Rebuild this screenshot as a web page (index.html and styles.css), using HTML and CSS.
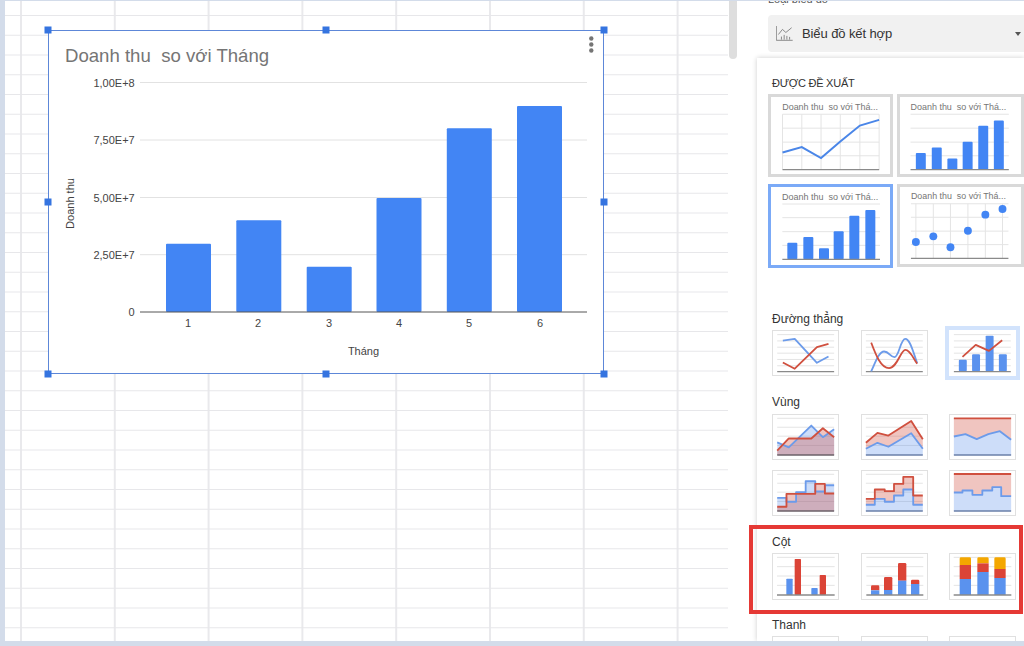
FILE: index.html
```html
<!DOCTYPE html>
<html lang="en">
<head>
    <meta charset="UTF-8">
    <title>Biểu đồ kết hợp</title>
    <link rel="stylesheet" href="styles.css">
</head>
<body>

<div class="page">
    <div class="sheet">
        <div class="chart">
            <svg class="chart-svg" viewBox="48 30 556 344">
                <text class="chart-title" x="65" y="62">Doanh thu&#160; so với Tháng</text>
                <circle class="chart-dot" cx="591.3" cy="38.5" r="2.2"/>
                <circle class="chart-dot" cx="591.3" cy="44.5" r="2.2"/>
                <circle class="chart-dot" cx="591.3" cy="50.5" r="2.2"/>

                <path class="chart-grid" d="M140 82.5H587M140 140H587M140 197.5H587M140 254.7H587"/>
                <rect class="chart-bar" x="166" y="243.7" width="45" height="68.3" rx="1"/>
                <rect class="chart-bar" x="236.3" y="220.3" width="45" height="91.7" rx="1"/>
                <rect class="chart-bar" x="306.7" y="266.7" width="45" height="45.3" rx="1"/>
                <rect class="chart-bar" x="376.5" y="198" width="45" height="114" rx="1"/>
                <rect class="chart-bar" x="446.8" y="128.3" width="45" height="183.7" rx="1"/>
                <rect class="chart-bar" x="517" y="106" width="45" height="206" rx="1"/>
                <path class="chart-base" d="M140 312H587"/>

                <text class="chart-label end" x="134.7" y="86.5">1,00E+8</text>
                <text class="chart-label end" x="134.7" y="144">7,50E+7</text>
                <text class="chart-label end" x="134.7" y="201.5">5,00E+7</text>
                <text class="chart-label end" x="134.7" y="258.7">2,50E+7</text>
                <text class="chart-label end" x="134.7" y="316">0</text>

                <text class="chart-label mid" x="188" y="327">1</text>
                <text class="chart-label mid" x="258" y="327">2</text>
                <text class="chart-label mid" x="329" y="327">3</text>
                <text class="chart-label mid" x="399" y="327">4</text>
                <text class="chart-label mid" x="469" y="327">5</text>
                <text class="chart-label mid" x="540" y="327">6</text>

                <text class="chart-label mid" x="363.5" y="355">Tháng</text>
                <text class="chart-label mid" transform="translate(74 203.5) rotate(-90)">Doanh thu</text>
            </svg>
            <span class="handle tl"></span>
            <span class="handle tc"></span>
            <span class="handle tr"></span>
            <span class="handle ml"></span>
            <span class="handle mr"></span>
            <span class="handle bl"></span>
            <span class="handle bc"></span>
            <span class="handle br"></span>
        </div>
    </div>

    <div class="sidebar">
        <div class="scrollbar"></div>
        <div class="panel">
            <div class="field-label">Loại biểu đồ</div>
            <div class="dropdown">
                <svg class="dropdown-icon" viewBox="156 78 50 44">
                    <path class="icon-line" d="M157 78V120H205M163 103L175 88L185 97L202 83"/>
                    <path class="icon-line" d="M172 118V109M180 118V104M188 118V107M196 118V110"/>
                </svg>
                <span class="dropdown-text">Biểu đồ kết hợp</span>
                <span class="caret"></span>
            </div>

            <div class="popup">
                <div class="section-title caps">ĐƯỢC ĐỀ XUẤT</div>
                <div class="suggest-grid">
                    <svg class="suggest" viewBox="25 12 373 250">
                        <text class="thumb-title" x="66" y="61">Doanh thu&#160; so với Thá...</text>
                        <path class="thumb-grid" d="M67 73H358M67 115H358M67 157H358M67 198H358M67 73V240M125 73V240M183 73V240M241 73V240M300 73V240M358 73V240"/>
                        <path class="thumb-base" d="M67 240H358"/>
                        <path class="line-strong" d="M67 188L125 172L183 205L241 155L300 107L358 90"/>
                    </svg>
                    <svg class="suggest wide" viewBox="412 12 381 250">
                        <text class="thumb-title" x="452" y="61">Doanh thu&#160; so với Thá...</text>
                        <path class="thumb-grid" d="M452 73H748M452 115H748M452 157H748M452 198H748"/>
                        <rect class="bar-strong" x="468" y="190" width="30" height="50" rx="3"/>
                        <rect class="bar-strong" x="516" y="173" width="30" height="67" rx="3"/>
                        <rect class="bar-strong" x="563" y="206" width="30" height="34" rx="3"/>
                        <rect class="bar-strong" x="609" y="156" width="30" height="84" rx="3"/>
                        <rect class="bar-strong" x="656" y="108" width="30" height="132" rx="3"/>
                        <rect class="bar-strong" x="703" y="92" width="30" height="148" rx="3"/>
                        <path class="thumb-base" d="M452 240H748"/>
                    </svg>
                    <svg class="suggest selected" viewBox="25 283 373 252">
                        <text class="thumb-title" x="66" y="330">Doanh thu&#160; so với Thá...</text>
                        <path class="thumb-grid" d="M67 343H360M67 384H360M67 426H360M67 467H360"/>
                        <rect class="bar-strong" x="82" y="459" width="30" height="50" rx="3"/>
                        <rect class="bar-strong" x="130" y="442" width="30" height="67" rx="3"/>
                        <rect class="bar-strong" x="177" y="476" width="30" height="33" rx="3"/>
                        <rect class="bar-strong" x="221" y="425" width="30" height="84" rx="3"/>
                        <rect class="bar-strong" x="268" y="378" width="30" height="131" rx="3"/>
                        <rect class="bar-strong" x="316" y="361" width="30" height="148" rx="3"/>
                        <path class="thumb-base" d="M67 509H360"/>
                    </svg>
                    <svg class="suggest wide" viewBox="412 283 381 252">
                        <text class="thumb-title" x="452" y="330">Doanh thu&#160; so với Thá...</text>
                        <path class="thumb-grid" d="M452 343H748M452 384H748M452 426H748M452 467H748M467 343V509M520 343V509M572 343V509M625 343V509M678 343V509M730 343V509"/>
                        <path class="thumb-base" d="M452 509H748"/>
                        <circle class="bar-strong" cx="467" cy="459" r="12"/>
                        <circle class="bar-strong" cx="520" cy="442" r="12"/>
                        <circle class="bar-strong" cx="572" cy="475" r="12"/>
                        <circle class="bar-strong" cx="625" cy="425" r="12"/>
                        <circle class="bar-strong" cx="678" cy="376" r="12"/>
                        <circle class="bar-strong" cx="730" cy="359" r="12"/>
                    </svg>
                </div>

                <div class="section-title line-head">Đường thẳng</div>
                <div class="thumb-grid-row">
                    <svg class="thumb" viewBox="35 75 201 139">
                        <path class="thumb-grid" d="M50 89H222M50 108H222M50 127H222M50 145H222M50 164H222M50 183H222"/>
                        <path class="thumb-base" d="M50 201H222"/>
                        <path class="line-blue" d="M67 107L103 102L170 174L205 155"/>
                        <path class="line-red" d="M67 173L103 192L170 127L205 117"/>
                    </svg>
                    <svg class="thumb" viewBox="301 75 201 139">
                        <path class="thumb-grid" d="M315 89H487M315 108H487M315 127H487M315 145H487M315 164H487M315 183H487"/>
                        <path class="thumb-base" d="M315 201H487"/>
                        <path class="line-blue" d="M331 200C345 170 355 140 370 140C385 140 390 158 402 157C415 155 420 102 434 102C450 102 460 150 470 175"/>
                        <path class="line-red" d="M331 113C345 150 360 190 385 190C410 190 420 135 434 135C450 135 460 165 470 177"/>
                    </svg>
                    <svg class="thumb selected" viewBox="566 75 201 139">
                        <path class="thumb-grid" d="M580 89H752M580 108H752M580 127H752M580 145H752M580 164H752M580 183H752"/>
                        <rect class="bar-blue" x="595" y="165" width="24" height="35" rx="3"/>
                        <rect class="bar-blue" x="635" y="148" width="24" height="52" rx="3"/>
                        <rect class="bar-blue" x="676" y="92" width="24" height="108" rx="3"/>
                        <rect class="bar-blue" x="716" y="148" width="24" height="52" rx="3"/>
                        <path class="thumb-base" d="M580 201H752"/>
                        <path class="line-red" d="M606 156L646 120L686 138L726 106"/>
                    </svg>
                </div>

                <div class="section-title area-head">Vùng</div>
                <div class="thumb-grid-row area-rows">
                    <svg class="thumb" viewBox="35 57 201 139">
                        <path class="thumb-grid" d="M50 70H222M50 97H222M50 124H222M50 152H222"/>
                        <path class="fill-blue" d="M50 143L85 158L153 92L188 127L222 103V181H50Z"/>
                        <path class="fill-red" d="M50 168L85 131L153 131L188 100L222 127V181H50Z"/>
                        <path class="line-blue" d="M50 143L85 158L153 92L188 127L222 103"/>
                        <path class="line-red" d="M50 168L85 131L153 131L188 100L222 127"/>
                        <path class="thumb-base dark" d="M50 181H222"/>
                    </svg>
                    <svg class="thumb" viewBox="301 57 201 139">
                        <path class="thumb-grid" d="M315 70H487M315 97H487M315 124H487M315 152H487"/>
                        <path class="fill-red" d="M315 144L350 114L383 122L452 78L487 133L487 162L452 115L383 156L350 144L315 162Z"/>
                        <path class="fill-blue" d="M315 162L350 144L383 156L452 115L487 162V181H315Z"/>
                        <path class="line-blue" d="M315 162L350 144L383 156L452 115L487 162"/>
                        <path class="line-red" d="M315 144L350 114L383 122L452 78L487 133"/>
                        <path class="thumb-base blue" d="M315 181H487"/>
                    </svg>
                    <svg class="thumb" viewBox="565 57 201 139">
                        <path class="fill-red" d="M579 70H752V135L718 109L683 118L648 133L614 118L579 125Z"/>
                        <path class="fill-blue" d="M579 125L614 118L648 133L683 118L718 109L752 135V181H579Z"/>
                        <path class="line-blue" d="M579 125L614 118L648 133L683 118L718 109L752 135"/>
                        <path class="line-red" d="M579 70H752"/>
                        <path class="thumb-base blue" d="M579 181H752"/>
                    </svg>
                    <svg class="thumb" viewBox="35 226 201 139">
                        <path class="thumb-grid" d="M50 239H222M50 266H222M50 293H222M50 321H222"/>
                        <path class="fill-blue" d="M50 310H78V322H107V293H136V260H165V291H194V272H222V350H50Z"/>
                        <path class="fill-red" d="M50 337H78V298H165V268H194V297H222V350H50Z"/>
                        <path class="line-blue" d="M50 310H78V322H107V293H136V260H165V291H194V272H222"/>
                        <path class="line-red" d="M50 337H78V298H165V268H194V297H222"/>
                        <path class="thumb-base dark" d="M50 350H222"/>
                    </svg>
                    <svg class="thumb" viewBox="301 226 201 139">
                        <path class="thumb-grid" d="M315 239H487M315 266H487M315 293H487M315 321H487"/>
                        <path class="fill-red" d="M315 313H342V285H372V290H400V268H428V247H458V303H487V331H458V285H428V303H400V322H372V313H342V331H315Z"/>
                        <path class="fill-blue" d="M315 331H342V313H372V322H400V303H428V285H458V331H487V350H315Z"/>
                        <path class="line-blue" d="M315 331H342V313H372V322H400V303H428V285H458V331H487"/>
                        <path class="line-red" d="M315 313H342V285H372V290H400V268H428V247H458V303H487"/>
                        <path class="thumb-base blue" d="M315 350H487"/>
                    </svg>
                    <svg class="thumb" viewBox="565 226 201 139">
                        <path class="fill-red" d="M579 238H752V305H722V278H695V288H665V301H635V288H605V294H579Z"/>
                        <path class="fill-blue" d="M579 294H605V288H635V301H665V288H695V278H722V305H752V350H579Z"/>
                        <path class="line-blue" d="M579 294H605V288H635V301H665V288H695V278H722V305H752"/>
                        <path class="line-red" d="M579 238H752"/>
                        <path class="thumb-base blue" d="M579 350H752"/>
                    </svg>
                </div>

                <div class="section-title area-head">Cột</div>
                <div class="thumb-grid-row">
                    <svg class="thumb tall" viewBox="82 100 201 141">
                        <path class="thumb-grid" d="M97 113H270M97 141H270M97 169H270M97 197H270"/>
                        <rect class="bar-blue" x="125" y="177" width="19" height="49" rx="2"/>
                        <rect class="bar-red" x="150" y="118" width="19" height="108" rx="2"/>
                        <rect class="bar-blue" x="200" y="205" width="19" height="21" rx="2"/>
                        <rect class="bar-red" x="225" y="166" width="19" height="60" rx="2"/>
                        <path class="thumb-base" d="M97 226H270"/>
                    </svg>
                    <svg class="thumb tall" viewBox="348 100 201 141">
                        <path class="thumb-grid" d="M364 113H535M364 141H535M364 169H535M364 197H535"/>
                        <path class="bar-red" d="M378 212V201Q378 197 382 197H399Q403 197 403 201V212Z"/>
                        <rect class="bar-blue" x="378" y="212" width="25" height="14"/>
                        <path class="bar-red" d="M417 211V176Q417 172 421 172H438Q442 172 442 176V211Z"/>
                        <rect class="bar-blue" x="417" y="211" width="25" height="15"/>
                        <path class="bar-red" d="M459 183V134Q459 130 463 130H480Q484 130 484 134V183Z"/>
                        <rect class="bar-blue" x="459" y="183" width="25" height="43"/>
                        <path class="bar-red" d="M498 193V184Q498 180 502 180H519Q523 180 523 184V193Z"/>
                        <rect class="bar-blue" x="498" y="193" width="25" height="33"/>
                        <path class="thumb-base" d="M364 226H535"/>
                    </svg>
                    <svg class="thumb tall" viewBox="613 100 201 141">
                        <path class="thumb-grid" d="M627 113H800M627 141H800M627 169H800M627 197H800"/>
                        <path class="bar-yellow" d="M645 136V117Q645 113 649 113H675Q679 113 679 117V136Z"/>
                        <rect class="bar-red" x="645" y="136" width="34" height="42"/>
                        <rect class="bar-blue" x="645" y="178" width="34" height="48"/>
                        <path class="bar-yellow" d="M698 131V117Q698 113 702 113H728Q732 113 732 117V131Z"/>
                        <rect class="bar-red" x="698" y="131" width="34" height="26"/>
                        <rect class="bar-blue" x="698" y="157" width="34" height="69"/>
                        <path class="bar-yellow" d="M749 148V117Q749 113 753 113H779Q783 113 783 117V148Z"/>
                        <rect class="bar-red" x="749" y="148" width="34" height="27"/>
                        <rect class="bar-blue" x="749" y="175" width="34" height="51"/>
                        <path class="thumb-base" d="M627 226H800"/>
                    </svg>
                </div>

                <div class="section-title bar-head">Thanh</div>
                <div class="thumb-grid-row">
                    <div class="thumb empty"></div>
                    <div class="thumb empty"></div>
                    <div class="thumb empty"></div>
                </div>
            </div>
        </div>
    </div>
</div>

<div class="highlight"></div>

</body>
</html>
```

FILE: styles.css
```css
* {
    box-sizing: border-box;
}

body {
    font-family: "Liberation Sans", Arial, sans-serif;
    margin: 0;
    width: 1024px;
    height: 646px;
    overflow: hidden;
    background-color: #d3dcea;
    position: relative;
}

.page {
    display: flex;
    height: 640px;
    margin-top: 1px;
    margin-left: 5px;
}

/* spreadsheet */
.sheet {
    width: 723px;
    flex-shrink: 0;
    padding: 29px 0 0 43px;
    background-color: #fff;
    background-image:
        linear-gradient(to bottom, #e7e7ea 1px, transparent 1px),
        linear-gradient(to right, #e9e9ec 1.5px, transparent 1.5px);
    background-size: 100% 19.75px, 93.8px 100%;
    background-position: 0 14px, 15px 0;
}

.chart {
    position: relative;
    width: 556px;
    height: 344px;
    background-color: #fff;
    outline: 1.5px solid #5d87d8;
    outline-offset: -1.5px;
}

.chart-svg {
    display: block;
    width: 556px;
    height: 344px;
}

.chart-title {
    font-size: 18.6px;
    fill: #757575;
}

.chart-dot {
    fill: #757575;
}

.chart-grid {
    stroke: #e2e2e2;
    stroke-width: 1;
    fill: none;
}

.chart-base {
    stroke: #555;
    stroke-width: 1;
    fill: none;
}

.chart-bar {
    fill: #4285f4;
}

.chart-label {
    font-size: 11px;
    fill: #444;
}

.end {
    text-anchor: end;
}

.mid {
    text-anchor: middle;
}

.handle {
    position: absolute;
    width: 7px;
    height: 7px;
    background-color: #3574e0;
    transform: translate(-50%, -50%);
}

.tl { left: 0; top: 0; }
.tc { left: 50%; top: 0; }
.tr { left: 100%; top: 0; }
.ml { left: 0; top: 50%; }
.mr { left: 100%; top: 50%; }
.bl { left: 0; top: 100%; }
.bc { left: 50%; top: 100%; }
.br { left: 100%; top: 100%; }

/* right side panel */
.sidebar {
    flex: 1;
    display: flex;
    background-color: #fff;
    overflow: hidden;
}

.scrollbar {
    width: 8px;
    height: 58px;
    margin-left: 1px;
    margin-right: 1px;
    background-color: #dedede;
    border-radius: 0 0 4px 4px;
    flex-shrink: 0;
}

.panel {
    flex: 1;
    min-width: 0;
}

.field-label {
    margin-left: 30px;
    margin-top: -9px;
    height: 14px;
    line-height: 14px;
    font-size: 11px;
    color: #555;
}

.dropdown {
    display: flex;
    align-items: center;
    height: 37px;
    margin-top: 9px;
    margin-left: 30px;
    padding: 0 3px 0 8px;
    background-color: #f1f1f1;
    border-radius: 4px 0 0 4px;
}

.dropdown-icon {
    width: 17px;
    height: 15px;
}

.icon-line {
    fill: none;
    stroke: #777;
    stroke-width: 2.5;
}

.dropdown-text {
    margin-left: 9px;
    font-size: 13px;
    letter-spacing: -0.1px;
    color: #333;
}

.caret {
    margin-left: auto;
    border-left: 3px solid transparent;
    border-right: 3px solid transparent;
    border-top: 4px solid #555;
}

.popup {
    height: 583px;
    margin-top: 6px;
    margin-left: 19px;
    padding: 17px 0 0 15px;
    background-color: #fff;
    box-shadow: 0 0 5px rgba(0, 0, 0, 0.2);
    overflow: hidden;
}

.section-title {
    height: 16px;
    line-height: 16px;
    font-size: 12px;
    color: #333;
}

.section-title.caps {
    font-size: 11px;
    letter-spacing: -0.25px;
}

.suggest-grid {
    display: grid;
    grid-template-columns: 125px 127px;
    grid-template-rows: 83px 84px;
    gap: 7px 4px;
    margin-top: 3px;
    margin-left: -4px;
}

.suggest {
    display: block;
    width: 125px;
    height: 83px;
    outline: 3.5px solid #d9d9d9;
    outline-offset: -3.5px;
}

.suggest.wide {
    width: 127px;
}

.suggest.selected {
    height: 84px;
    outline-color: #7baaf7;
}

.thumb-title {
    font-size: 27px;
    fill: #757575;
}

.thumb-grid {
    fill: none;
    stroke: #e4e4e4;
    stroke-width: 3;
}

.thumb-base {
    fill: none;
    stroke: #8a8a8a;
    stroke-width: 4;
}

.thumb-base.dark {
    stroke: #6b6068;
}

.thumb-base.blue {
    stroke: #6a7fa8;
}

.line-strong {
    fill: none;
    stroke: #4a86e8;
    stroke-width: 6;
}

.bar-strong {
    fill: #4285f4;
}

.line-head {
    margin-top: 43px;
}

.thumb-grid-row {
    display: grid;
    grid-template-columns: 67px 67px 67px;
    column-gap: 21.5px;
    margin-top: 3px;
}

.area-rows {
    row-gap: 10px;
    margin-top: 4px;
}

.area-head {
    margin-top: 18px;
}

.bar-head {
    margin-top: 17px;
}

.thumb {
    display: block;
    width: 67px;
    height: 46px;
    outline: 1px solid #e0e0e0;
    outline-offset: -1px;
}

.thumb.tall {
    height: 47px;
}

.thumb.selected {
    outline: 4.5px solid #d2e3fc;
    outline-offset: 0;
}

.thumb.empty {
    height: 20px;
}

.line-blue {
    fill: none;
    stroke: #6c9bea;
    stroke-width: 5.5;
    stroke-linejoin: round;
}

.line-red {
    fill: none;
    stroke: #d0503f;
    stroke-width: 5.5;
    stroke-linejoin: round;
}

.fill-blue {
    fill: #4a86e8;
    fill-opacity: 0.28;
}

.fill-red {
    fill: #d0503f;
    fill-opacity: 0.33;
}

.bar-blue {
    fill: #5a92ee;
}

.bar-red {
    fill: #db4437;
}

.bar-yellow {
    fill: #f4a700;
}

/* red annotation box drawn on top of the screenshot */
.highlight {
    position: absolute;
    left: 749px;
    top: 525px;
    width: 274px;
    height: 89px;
    border: 4px solid #e53935;
}
```
